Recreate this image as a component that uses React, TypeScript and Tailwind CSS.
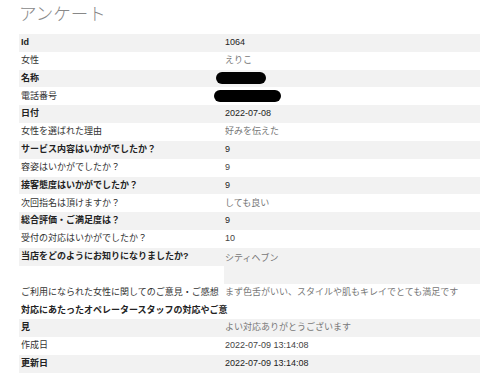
import React from "react";

const FONT = { fontFamily: '"Liberation Sans", "Noto Sans CJK JP", sans-serif' };

type Row = { label: string; value: React.ReactNode; gray: boolean; jp?: boolean };

const Pill = ({ w }: { w: number }) => (
  <span
    className="inline-block h-[12px] rounded-full bg-black -ml-[9px] align-middle"
    style={{ width: w }}
  />
);

const rows: Row[] = [
  { label: "Id", value: "1064", gray: true },
  { label: "女性", value: "えりこ", gray: false, jp: true },
  { label: "名称", value: <Pill w={50} />, gray: true },
  { label: "電話番号", value: <span className="-ml-[2px] inline-block"><Pill w={67} /></span>, gray: false },
  { label: "日付", value: "2022-07-08", gray: true },
  { label: "女性を選ばれた理由", value: "好みを伝えた", gray: false, jp: true },
  { label: "サービス内容はいかがでしたか？", value: "9", gray: true },
  { label: "容姿はいかがでしたか？", value: "9", gray: false },
  { label: "接客態度はいかがでしたか？", value: "9", gray: true },
  { label: "次回指名は頂けますか？", value: "しても良い", gray: false, jp: true },
  { label: "総合評価・ご満足度は？", value: "9", gray: true },
  { label: "受付の対応はいかがでしたか？", value: "10", gray: false },
];

function Line({ label, value, gray, jp }: Row) {
  return (
    <div className={`flex h-[17.83px] items-center ${gray ? "bg-[#f2f2f2]" : ""}`}>
      <div
        className={`w-[205px] shrink-0 whitespace-nowrap pl-[2px] ${
          gray ? "font-bold text-[#222]" : "text-[#333]"
        }`}
      >
        {label}
      </div>
      <div className={`pl-[1px] ${jp ? "text-[#777]" : gray ? "text-[#222]" : "text-[#444]"}`}>{value}</div>
    </div>
  );
}

export default function App() {
  return (
    <div className="h-[386px] w-[480px] overflow-hidden bg-white text-[9px]" style={FONT}>
      <div className="h-[34px] pl-[19px] pt-[1px] text-[17.5px] font-light leading-[26px] text-[#888]">
        アンケート
      </div>
      <div className="ml-[19px]">
        {rows.map((r, i) => (
          <Line key={i} {...r} />
        ))}
        {/* row 13 */}
        <div className="flex items-start">
          <div className="flex h-[17.83px] w-[205px] shrink-0 items-center whitespace-nowrap bg-[#f2f2f2] pl-[2px] font-bold text-[#222]">
            当店をどのようにお知りになりましたか?
          </div>
          <div className="h-[35.66px] flex-1 bg-[#f2f2f2] pl-[1px] pt-[4px] text-[#777]">シティヘブン</div>
        </div>
        {/* row 14 */}
        <div className="flex h-[17.83px] items-center">
          <div className="w-[205px] shrink-0 whitespace-nowrap pl-[2px] text-[#333]">
            ご利用になられた女性に関してのご意見・ご感想
          </div>
          <div className="whitespace-nowrap pl-[1px] text-[#777]">まず色舌がいい、スタイルや肌もキレイでとても満足です</div>
        </div>
        {/* row 15 */}
        <div className="flex h-[17.83px] items-center">
          <div className="w-[205px] shrink-0 whitespace-nowrap pl-[2px] font-bold text-[#222]">
            対応にあたったオペレータースタッフの対応やご意
          </div>
        </div>
        <div className="flex h-[17.83px] items-center bg-[#f2f2f2]">
          <div className="w-[205px] shrink-0 pl-[2px] font-bold text-[#222]">見</div>
          <div className="pl-[1px] text-[#777]">よい対応ありがとうございます</div>
        </div>
        <Line label="作成日" value="2022-07-09 13:14:08" gray={false} />
        <Line label="更新日" value="2022-07-09 13:14:08" gray={true} />
      </div>
    </div>
  );
}
